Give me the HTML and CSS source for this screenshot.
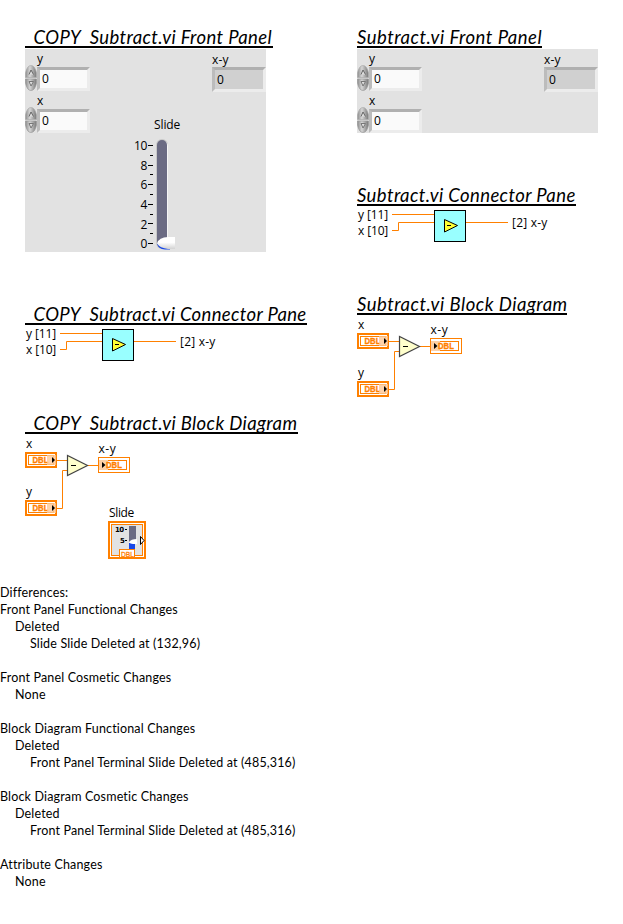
FILE: index.html
```
<!DOCTYPE html>
<html lang="en">
<head>
<meta charset="utf-8">
<title>Subtract.vi differences</title>
<link rel="stylesheet" href="styles.css">
</head>
<body>
<svg class="defs" width="0" height="0" aria-hidden="true">
  <defs>
    <linearGradient id="metal" x1="0" x2="1" y1="0" y2="0">
      <stop offset="0" stop-color="#8c8c8c"/><stop offset=".4" stop-color="#d6d6d6"/><stop offset="1" stop-color="#777"/>
    </linearGradient>
    <linearGradient id="knob" x1="0" x2="0" y1="0" y2="1">
      <stop offset=".45" stop-color="#fff"/><stop offset="1" stop-color="#d2d2d2"/>
    </linearGradient>
    <symbol id="spinner" viewBox="0 0 12 26">
      <path d="M.5 12.500V8Q2 .5 6 .5T11.500 8V12.500Z" fill="url(#metal)" stroke="#aaa" stroke-width=".7"/>
      <path d="M.5 14V18Q2 25.500 6 25.500T11.500 18V14Z" fill="url(#metal)" stroke="#999" stroke-width=".7"/>
      <path d="M4 9.500L6 5L8.500 9.500" fill="#ddd" stroke="#666"/>
      <path d="M4 16.500H8.500L6 21Z" fill="#ddd" stroke="#777"/>
    </symbol>
    <symbol id="connector" viewBox="0 0 200 40">
      <g class="wire"><path d="M35 8.500H77M35 24.500H41.500V16.500H77M109 16.500H151"/></g>
      <rect x="77.500" y="4.500" width="31" height="31" fill="#9ff" stroke="#000"/>
      <path d="M87.500 13.500V26L100.500 19.500Z" fill="#ff3" stroke="#000"/>
      <path d="M90 19.500H94" stroke="#000"/>
      <text x="1" y="13" textLength="30">y [11]</text>
      <text x="1" y="29" textLength="30">x [10]</text>
      <text x="155" y="21" textLength="35">[2] x-y</text>
    </symbol>
    <symbol id="control" viewBox="0 0 32 16">
      <rect x="1" y="1" width="30" height="14" fill="#fff" stroke="#ff8000" stroke-width="2"/>
      <rect x="3.500" y="3.500" width="25" height="9" fill="#fff" stroke="#ff8000"/>
      <text class="dbl" x="7.500" y="11" textLength="16" lengthAdjust="spacingAndGlyphs">DBL</text>
      <rect x="22" y="3" width="9" height="10" fill="#fcc896" opacity=".8"/>
      <path d="M27 5V11L30 8Z"/>
    </symbol>
    <symbol id="indicator" viewBox="0 0 32 16">
      <rect x=".5" y=".5" width="31" height="15" fill="#fff" stroke="#ff8000"/>
      <rect x="3.500" y="3.500" width="25" height="9" fill="#fff" stroke="#ff8000"/>
      <rect x="1" y="3" width="9" height="10" fill="#fdd0a6"/>
      <text class="dbl" x="8" y="11" textLength="16" lengthAdjust="spacingAndGlyphs">DBL</text>
      <path d="M4 5V11L7.500 8Z"/>
    </symbol>
    <symbol id="subtract" viewBox="0 0 110 90">
      <g class="wire"><path d="M32 26.500H43M63 31.500H73M32 74.500H37.500V36.500H43"/></g>
      <path d="M42.500 21.500V41.500L62.500 31.500Z" fill="#ffc" stroke="#444" stroke-width="1.200"/>
      <path d="M46 31.500H51" stroke="#000"/>
      <text x="1" y="13.500">x</text>
      <text x="1" y="62">y</text>
      <text x="73.500" y="19" textLength="17">x-y</text>
      <use href="#control" x="0" y="18" width="32" height="16"/>
      <use href="#control" x="0" y="66" width="32" height="16"/>
      <use href="#indicator" x="73" y="23" width="32" height="16"/>
    </symbol>
  </defs>
</svg>

<main class="report">
  <div class="columns">
    <div class="column">
      <section class="front">
        <h2 class="copy w-copy-front">_COPY_Subtract.vi Front Panel</h2>
        <div class="panel tall">
          <div class="inputs">
            <div class="field"><span class="label">y</span><div class="row"><svg class="spin"><use href="#spinner"/></svg><span class="box">0</span></div></div>
            <div class="field"><span class="label">x</span><div class="row"><svg class="spin"><use href="#spinner"/></svg><span class="box">0</span></div></div>
          </div>
          <svg class="slide" width="70" height="140" viewBox="0 0 70 140">
            <text x="24" y="17" textLength="26">Slide</text>
            <g text-anchor="end">
              <text x="17" y="38">10</text><text x="17" y="58">8</text><text x="17" y="77">6</text>
              <text x="17" y="97">4</text><text x="17" y="117">2</text><text x="17" y="136">0</text>
            </g>
            <path d="M18 33.500H23M20 43.500H23M18 53.500H23M20 62.500H23M18 72.500H23M20 82.500H23M18 92.500H23M20 102.500H23M18 111.500H23M20 121.500H23M18 131.500H23" stroke="#000"/>
            <rect x="26" y="27" width="12" height="110" rx="6" fill="#c8c8c8"/>
            <rect x="28" y="29" width="10" height="107" rx="5" fill="#f5f5f5"/>
            <rect x="27" y="28" width="10" height="108" rx="5" fill="#6b6b83"/>
            <path d="M27 131Q28 137 35 137.500H40V131Z" fill="#1747e8"/>
            <path d="M27 131.500Q29 125 38 125H45V137H38Q30 136 27 131.500Z" fill="url(#knob)"/>
          </svg>
          <div class="field output"><span class="label">x-y</span><span class="box readonly">0</span></div>
        </div>
      </section>
      <section class="connector-left">
        <h2 class="copy w-copy-conn">_COPY_Subtract.vi Connector Pane</h2>
        <svg width="200" height="40"><use href="#connector"/></svg>
      </section>
      <section class="block-left">
        <h2 class="copy w-copy-block">_COPY_Subtract.vi Block Diagram</h2>
        <svg width="150" height="130" viewBox="0 0 150 130">
          <use href="#subtract" width="110" height="90"/>
          <text x="84" y="83" textLength="25">Slide</text>
          <rect x="84" y="88" width="36" height="36" fill="#fff" stroke="#ff8000" stroke-width="2"/>
          <rect x="86.500" y="90.500" width="31" height="31" fill="#e2e2e2" stroke="#ff8000"/>
          <text class="tiny" x="90" y="98" textLength="9">10</text>
          <text class="tiny" x="95" y="109">5</text>
          <path d="M100 95.500H102M100 106.500H102M96.500 115V117" stroke="#000"/>
          <rect x="104" y="92" width="7" height="16" fill="#6b6b83"/>
          <rect x="104" y="109" width="6" height="8" fill="#1747e8"/>
          <path d="M104 108Q106 105 112 105V110H108Q105 110 104 108Z" fill="#fff"/>
          <path d="M115.500 102.500V110.500L119 106.500Z" fill="#fff" stroke="#000"/>
          <rect x="94.500" y="115.500" width="15" height="8" fill="#fff" stroke="#ff8000"/>
          <text class="dbl thin" x="96" y="122.500" textLength="13" lengthAdjust="spacingAndGlyphs">DBL</text>
        </svg>
      </section>
    </div>
    <div class="column">
      <section class="front">
        <h2 class="w-front">Subtract.vi Front Panel</h2>
        <div class="panel">
          <div class="inputs">
            <div class="field"><span class="label">y</span><div class="row"><svg class="spin"><use href="#spinner"/></svg><span class="box">0</span></div></div>
            <div class="field"><span class="label">x</span><div class="row"><svg class="spin"><use href="#spinner"/></svg><span class="box">0</span></div></div>
          </div>
          <div class="field output"><span class="label">x-y</span><span class="box readonly">0</span></div>
        </div>
      </section>
      <section class="connector-right">
        <h2 class="w-conn">Subtract.vi Connector Pane</h2>
        <svg width="200" height="40"><use href="#connector"/></svg>
      </section>
      <section class="block-right">
        <h2 class="w-block">Subtract.vi Block Diagram</h2>
        <svg width="110" height="90"><use href="#subtract"/></svg>
      </section>
    </div>
  </div>

  <section class="differences">
    <p>Differences:</p>
    <div class="group"><p>Front Panel Functional Changes</p><p class="kind">Deleted</p><p class="item">Slide Slide Deleted at (132,96)</p></div>
    <div class="group"><p>Front Panel Cosmetic Changes</p><p class="kind">None</p></div>
    <div class="group"><p>Block Diagram Functional Changes</p><p class="kind">Deleted</p><p class="item">Front Panel Terminal Slide Deleted at (485,316)</p></div>
    <div class="group"><p>Block Diagram Cosmetic Changes</p><p class="kind">Deleted</p><p class="item">Front Panel Terminal Slide Deleted at (485,316)</p></div>
    <div class="group"><p>Attribute Changes</p><p class="kind">None</p></div>
  </section>
</main>
</body>
</html>
```
FILE: styles.css
```
* { box-sizing: border-box; }
body { margin: 0; background: #fff; color: #000; font: 12px/16px "Open Sans", "Noto Sans", sans-serif; }
.defs { position: absolute; }
svg { display: block; }
svg text { font: 12px "Open Sans", "Noto Sans", sans-serif; letter-spacing: -.3px; fill: #000; }
svg text.dbl { font: 900 8.5px "Liberation Sans", sans-serif; fill: #ff8000; stroke: #ff8000; stroke-width: .3px; letter-spacing: 0; }
svg text.thin { font-weight: 400; font-size: 8px; }
svg text.tiny { font: bold 7px "DejaVu Sans", sans-serif; letter-spacing: 0; }
.wire { fill: none; stroke: #ff8000; stroke-width: 1; }

.report { height: 924px; overflow: hidden; padding-top: 28px; }
.columns { display: grid; grid-template-columns: 332px 1fr; padding-left: 25px; height: 556px; }
h2 {
  margin: 0; height: 20px; overflow-x: visible; overflow-y: clip;
  border-bottom: 2px solid #000;
  font: italic 400 18.5px/19px Lato, "Open Sans", sans-serif; letter-spacing: .45px; white-space: nowrap;
}
.front h2 { margin-bottom: 1px; }
.connector-left { margin-top: 53px; }
.block-left { margin-top: 49px; }
.connector-right { margin-top: 53px; }
.block-right { margin-top: 49px; }

.w-copy-front { width: 248px; letter-spacing: .38px; }
.w-copy-conn { width: 282px; letter-spacing: .34px; }
.w-copy-block { width: 273px; letter-spacing: .38px; }
.w-front { width: 185px; letter-spacing: .5px; }
.w-conn { width: 219px; letter-spacing: .4px; }
.w-block { width: 210px; letter-spacing: .5px; }

.panel { display: flex; width: 241px; height: 84px; background: #e2e2e2; }
.panel.tall { height: 203px; }
.inputs { width: 65px; }
.field { height: 42px; }
.label { display: block; height: 16px; padding: 2px 0 0 12px; line-height: 16px; }
.row { display: flex; }
.spin { width: 12px; height: 26px; }
.box {
  display: block; width: 53px; height: 24px; margin-top: 2px; padding-left: 2px;
  border: 3px solid; border-color: #b0b0b0 #ececec #ececec #bcbcbc;
  background: #fafafa; line-height: 18px;
}
.slide { margin: 63px -110px 0 40px; flex: none; }
.output { margin-left: auto; }
.output .label { padding: 3px 0 0; letter-spacing: .2px; }
.readonly { width: 54px; height: 25px; border-width: 3px; background: #d0d0d0; line-height: 19px; }

.differences { font: 12.5px/17px Lato, "Open Sans", sans-serif; letter-spacing: .16px; font-variant-ligatures: none; }
.differences p { margin: 0; }
.group + .group { margin-top: 17px; }
.differences .kind { padding-left: 15px; }
.differences .item { padding-left: 30px; }
```
